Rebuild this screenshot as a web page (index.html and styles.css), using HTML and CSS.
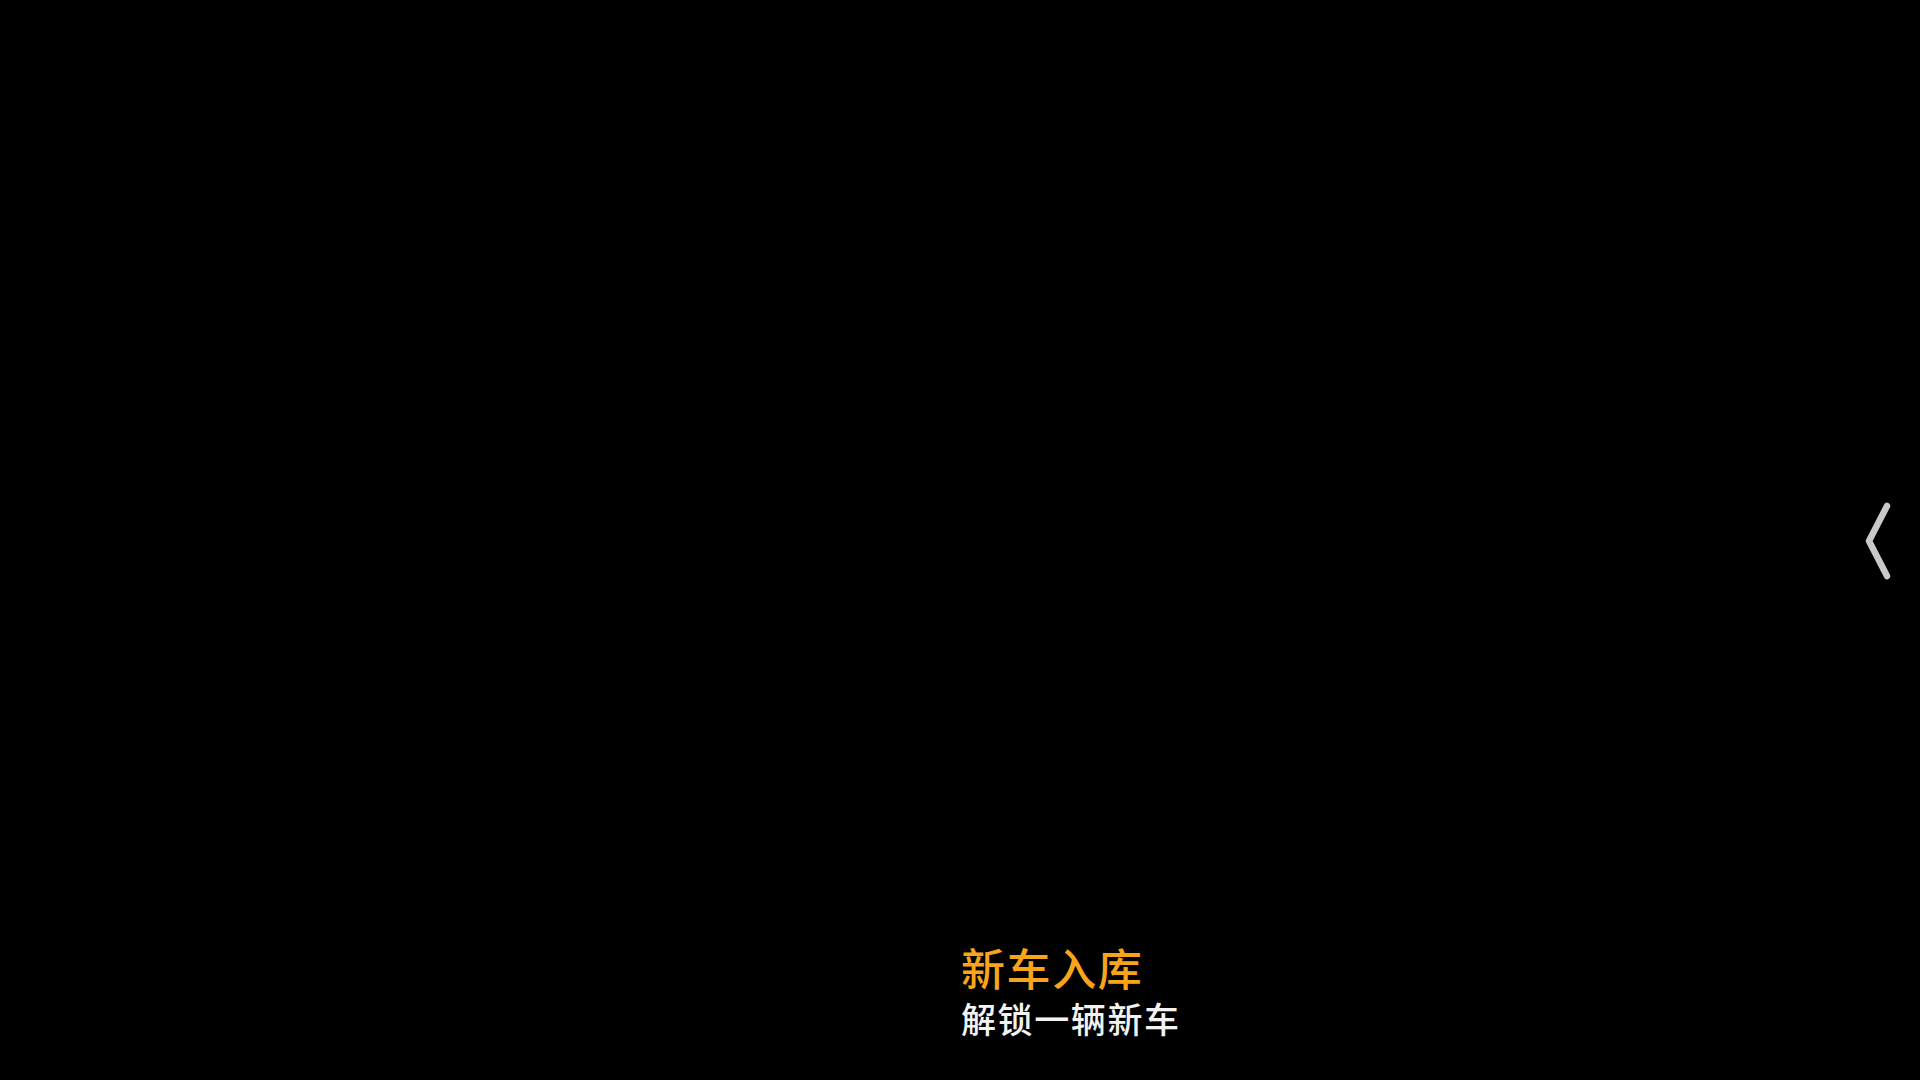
FILE: index.html
```html
<!DOCTYPE html>
<html lang="zh-CN">
<head>
<meta charset="utf-8">
<title>新车入库</title>
<link rel="stylesheet" href="styles.css">
</head>
<body>
<div class="screen">
  <div class="stage"></div>
  <div class="caption">
    <div class="title">新车入库</div>
    <div class="subtitle">解锁一辆新车</div>
  </div>
  <button class="nav-prev" aria-label="返回">
    <svg width="40" height="90" viewBox="0 0 40 90"><polyline points="30,16 12,51 30,86" fill="none" stroke="#c9c9c9" stroke-width="6.5" stroke-linecap="round" stroke-linejoin="round"/></svg>
  </button>
</div>
</body>
</html>
```
FILE: styles.css
```css
html, body {
  margin: 0;
  padding: 0;
  background: #000;
}
.screen {
  position: relative;
  width: 1920px;
  height: 1080px;
  background: #000;
  display: flex;
  flex-direction: column;
  overflow: hidden;
  font-family: "Noto Sans CJK SC", "Noto Sans", sans-serif;
}
.stage {
  flex: 1;
}
.caption {
  display: flex;
  flex-direction: column;
  margin-left: 961px;
  padding-bottom: 41px;
}
.title {
  color: #f8a51b;
  font-size: 44px;
  line-height: 50px;
  font-weight: 500;
  letter-spacing: 1.6px;
  margin-bottom: 5px;
}
.subtitle {
  color: #f2f2f2;
  font-size: 35px;
  line-height: 42px;
  font-weight: 500;
  letter-spacing: 1.6px;
}
.nav-prev {
  position: absolute;
  right: 23px;
  top: 490px;
  background: none;
  border: 0;
  padding: 0;
  width: 40px;
  height: 90px;
}
.nav-prev svg {
  display: block;
}
```
